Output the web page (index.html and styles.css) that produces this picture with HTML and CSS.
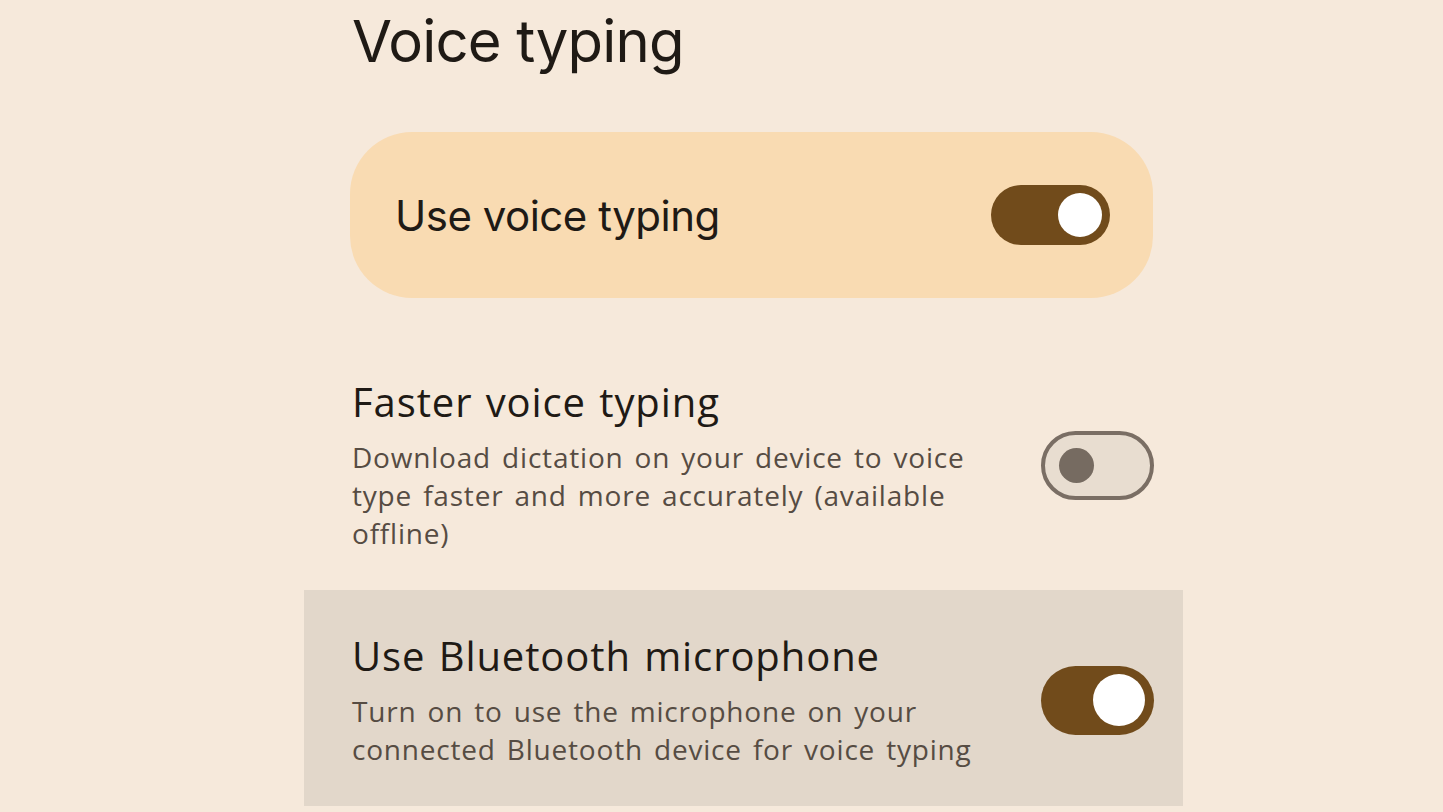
FILE: index.html
```html
<!DOCTYPE html>
<html lang="en">
<head>
    <meta charset="UTF-8">
    <meta name="viewport" content="width=device-width, initial-scale=1.0">
    <title>Voice typing</title>
    <link rel="stylesheet" href="styles.css">
</head>
<body>
    <div class="page">
        <h1 class="title">Voice typing</h1>

        <div class="main-card">
            <span class="main-label">Use voice typing</span>
            <span class="switch switch-on switch-main"><span class="knob"></span></span>
        </div>

        <div class="row">
            <div class="row-text">
                <div class="row-title">Faster voice typing</div>
                <div class="row-desc">Download dictation on your device to voice type faster and more accurately (available offline)</div>
            </div>
            <span class="switch switch-off"><span class="knob"></span></span>
        </div>

        <div class="row row-pressed">
            <div class="row-text">
                <div class="row-title">Use Bluetooth microphone</div>
                <div class="row-desc">Turn on to use the microphone on your connected Bluetooth device for voice typing</div>
            </div>
            <span class="switch switch-on"><span class="knob"></span></span>
        </div>
    </div>
</body>
</html>
```

FILE: styles.css
```css
body
{
    margin: 0;
    background-color: #f6e9db;
    color: #1f1a15;
    font-family: "Open Sans", Roboto, sans-serif;
}
.page
{
    width: 879px;
    margin-left: 304px;
}
.title
{
    margin: 0 0 0 48px;
    padding-top: 6px;
    font-family: Inter, "Open Sans", sans-serif;
    font-weight: 400;
    font-size: 58px;
    line-height: 70px;
    letter-spacing: -0.8px;
}

/* big toggle card */
.main-card
{
    display: flex;
    align-items: center;
    justify-content: space-between;
    height: 166px;
    width: 803px;
    box-sizing: border-box;
    margin: 56px 0 38px 46px;
    padding: 0 43px 0 45px;
    background-color: #f9dbb2;
    border-radius: 62px;
}
.main-label
{
    font-family: Inter, "Open Sans", sans-serif;
    font-size: 42px;
    letter-spacing: -0.5px;
}

/* setting rows */
.row
{
    display: flex;
    align-items: center;
    justify-content: space-between;
    padding: 42px 29px 38px 48px;
}
.row-pressed
{
    background-color: #e2d7ca;
}
.row-text
{
    width: 640px;
}
.row-title
{
    font-size: 40px;
    line-height: 48px;
    margin-bottom: 12px;
    letter-spacing: 0.9px;
    word-spacing: 2px;
}
.row-desc
{
    font-size: 28px;
    line-height: 38px;
    color: #564c43;
    letter-spacing: 0.8px;
    word-spacing: 3px;
}

/* switches */
.switch
{
    position: relative;
    display: inline-block;
    box-sizing: border-box;
    width: 113px;
    height: 69px;
    border-radius: 35px;
    flex-shrink: 0;
}
.switch-main
{
    width: 119px;
    height: 60px;
    border-radius: 30px;
}
.switch-on
{
    background-color: #714b1b;
}
.switch-off
{
    background-color: #e8ddd0;
    border: 4px solid #7a6e64;
}
.knob
{
    position: absolute;
    top: 50%;
    border-radius: 50%;
}
.switch-on .knob
{
    right: 9px;
    width: 52px;
    height: 52px;
    margin-top: -26px;
    background-color: #ffffff;
}
.switch-main .knob
{
    right: 8px;
    width: 44px;
    height: 44px;
    margin-top: -22px;
}
.switch-off .knob
{
    left: 14px;
    width: 35px;
    height: 35px;
    margin-top: -17.5px;
    background-color: #766b61;
}
```
